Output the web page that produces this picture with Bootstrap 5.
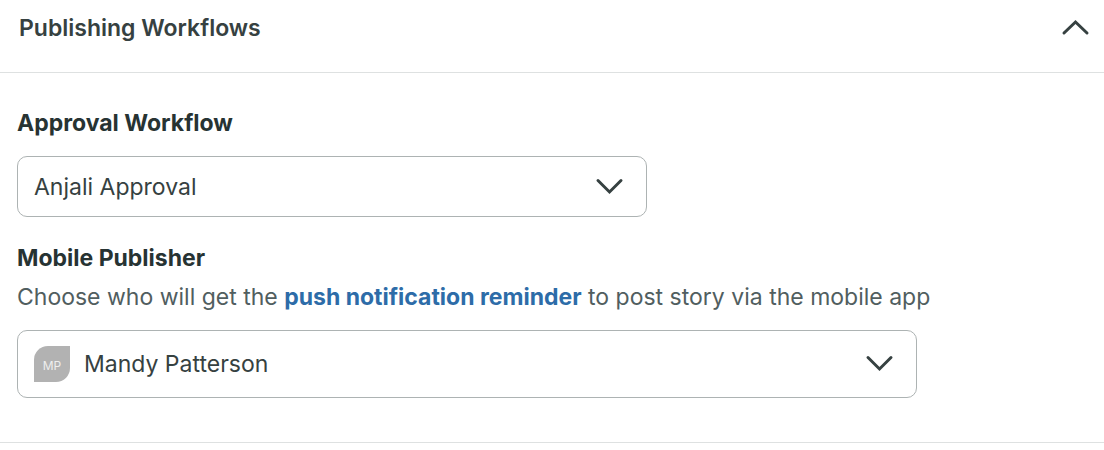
<!DOCTYPE html>
<html lang="en">
<head>
<meta charset="utf-8">
<meta name="viewport" content="width=device-width, initial-scale=1">
<title>Publishing Workflows</title>
<link href="https://cdn.jsdelivr.net/npm/bootstrap@5.3.0/dist/css/bootstrap.min.css" rel="stylesheet">
<style>
  body { font-family: Inter, "Liberation Sans", sans-serif; font-size: 23px; line-height: 32px; color: #364141; background: #fff; }
  .panel-head { padding: 12px 14px 28px 19px; border-bottom: 1px solid #dee1e1; }
  .panel-title { font-size: 23px; line-height: 32px; font-weight: 600; color: #364141; }
  .panel-body { padding: 34px 17px 44px; border-bottom: 1px solid #dee1e1; }
  .field-label { font-size: 23px; line-height: 32px; font-weight: 700; color: #273333; }
  .label-gap { margin-bottom: 17px; }
  .field-gap { margin-bottom: 25px; }
  .hint { color: #515e5f; margin: 7px 0 17px; }
  .hint a { color: #2d6ca8; font-weight: 700; text-decoration: none; }
  .picker { border: 1px solid #adb3b3; border-radius: 10px; background: #fff; position: relative; width: 100%; }
  .picker select { display: block; appearance: none; border: 0; background: transparent; color: #364141; width: 100%; padding: 0 60px 0 16px; height: 59px; font-size: 23px; line-height: 32px; border-radius: 10px; }
  .picker-sm { max-width: 630px; }
  .picker-lg { max-width: 900px; }
  .picker-lg select { height: 66px; padding-left: 66px; }
  .chev { fill: none; stroke: #364141; stroke-width: 3; stroke-linecap: round; }
  .picker .chev { position: absolute; right: 22px; top: 0; bottom: 2px; margin: auto 0; pointer-events: none; }
  .initials { position: absolute; left: 16px; top: 15px; width: 36px; height: 36px; border-radius: 14px 0; background: #b2b2b2; color: #eee; font-size: 12px; line-height: 40px; text-align: center; pointer-events: none; }
</style>
</head>
<body>
<section>
  <header class="panel-head d-flex align-items-center justify-content-between">
    <h2 class="panel-title m-0">Publishing Workflows</h2>
    <button type="button" class="btn p-0 border-0 d-flex" aria-label="Collapse section" aria-expanded="true">
      <svg class="chev" width="29" height="18" viewBox="0 0 29 18"><path d="M3 14 14.500 3 26 14"/></svg>
    </button>
  </header>
  <form class="panel-body">
    <label class="field-label label-gap d-block" for="approval">Approval Workflow</label>
    <div class="picker picker-sm field-gap">
      <select id="approval"><option>Anjali Approval</option></select>
      <svg class="chev" width="29" height="18" viewBox="0 0 29 18"><path d="M3 3.500 14.500 15 26 3.500"/></svg>
    </div>
    <label class="field-label d-block" for="publisher">Mobile Publisher</label>
    <p class="hint">Choose who will get the <a href="#">push notification reminder</a> to post story via the mobile app</p>
    <div class="picker picker-lg">
      <span class="initials" aria-hidden="true">MP</span>
      <select id="publisher"><option>Mandy Patterson</option></select>
      <svg class="chev" width="29" height="18" viewBox="0 0 29 18"><path d="M3 3.500 14.500 15 26 3.500"/></svg>
    </div>
  </form>
</section>
<script src="https://cdn.jsdelivr.net/npm/bootstrap@5.3.0/dist/js/bootstrap.bundle.min.js"></script>
</body>
</html>
